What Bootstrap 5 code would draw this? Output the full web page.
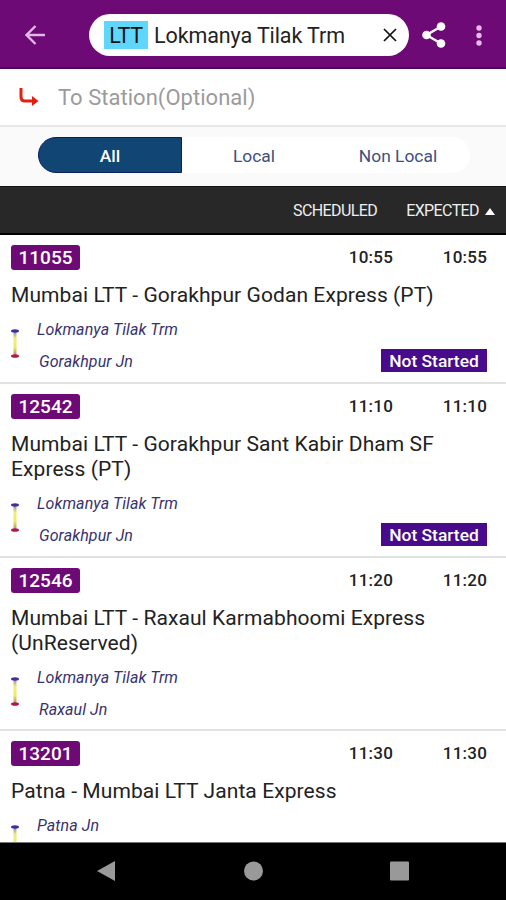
<!DOCTYPE html>
<html lang="en">
<head>
<meta charset="utf-8">
<meta name="viewport" content="width=device-width, initial-scale=1">
<title>Station departures</title>
<link href="https://cdn.jsdelivr.net/npm/bootstrap@5.3.0/dist/css/bootstrap.min.css" rel="stylesheet">
<style>
body{font-family:Roboto,"Liberation Sans",sans-serif;color:#222;background:#fff}
.screen{width:506px;height:900px}
.topbar{height:69px;background:#6d0a75;border-bottom:2px solid #520260}
.back{margin-left:25px;margin-top:2px;width:21px;height:20px}
.pill{margin-left:43px;margin-top:2px;width:320px;height:42px;padding-left:15px;padding-right:12px;font-size:21.5px;letter-spacing:-.1px;white-space:nowrap}
.code{background:#5fd6fc;height:28px;line-height:30px;width:44px;margin-right:6px;color:#111;letter-spacing:-.4px}
.pill .name{line-height:30px;padding-top:2px}
.share{margin-left:13px;margin-top:2px}
.dest{height:56px;padding-left:18px;font-size:22px;color:#9b9b9b;letter-spacing:.03px}
.dest span{margin-left:19px;padding-top:1px}
.filters{height:61px;background:#fafafa;border-top:2px solid #e8e8e8;padding:10px 36px 0 38px}
.filters .btn{width:144px;height:36px;padding:0;border:0;border-radius:0;font-size:17.4px;line-height:38px;color:#3d4f80;background:#fff}
.filters .btn.active{background:#114573;color:#fff;border:1px solid #081f64;line-height:36px;font-weight:500}
.filters .btn:first-child{border-radius:18px 0 0 18px}
.filters .btn:last-child{border-radius:0 18px 18px 0}
.heads{height:49px;background:#282828;border-top:1px solid #111;border-bottom:2px solid #000;color:#eee;font-size:16px;letter-spacing:-.6px;padding-right:11px;padding-top:2px}
.heads .exp{margin-left:29px}
.heads svg{margin-left:6px}
.trains{overflow:hidden}
.train{border-bottom:2px solid #e2e2e2;height:149px;padding:10px 19px 0 11px;flex:none}
.train.two{height:174px}
.train.two.brief{height:173px}
.num{background:#6d0a75;width:69px;height:25px;line-height:26px;font-size:19px;border-radius:3px;font-weight:500}
.time{font-size:17px;font-weight:500;letter-spacing:.2px;line-height:25px;width:94px;text-align:right}
.title{font-size:21px;line-height:25px;letter-spacing:.08px;margin-top:13px;white-space:nowrap}
.route{margin-top:9px;height:64px;font-size:16px;font-style:italic;color:#37336f;letter-spacing:.1px}
.route svg{margin-right:18px;margin-top:12px;flex:none}
.route .stop{height:32px;line-height:25px}
.route .stop+.stop{padding-left:2px}
.status{background:#470b8b;width:106px;height:23px;line-height:25px;font-size:17.4px;letter-spacing:0;margin-top:32px;font-weight:500}
.navkeys{height:58px;background:#000;border-top:1px solid #777}
</style>
<script src="https://cdn.jsdelivr.net/npm/bootstrap@5.3.0/dist/js/bootstrap.bundle.min.js"></script>
</head>
<body>
<svg class="position-absolute" width="0" height="0">
<defs><linearGradient id="rail" x1="0" y1="0" x2="0" y2="1"><stop offset="0" stop-color="#8a80b8"/><stop offset=".3" stop-color="#eeee7a"/><stop offset=".65" stop-color="#eeee60"/><stop offset="1" stop-color="#b08080"/></linearGradient></defs>
</svg>
<div class="screen d-flex flex-column overflow-hidden">
<header class="topbar d-flex align-items-center flex-shrink-0">
<svg class="back flex-shrink-0" viewBox="0 0 21 20" fill="none" stroke="#dfb8e4" stroke-width="2.4"><path d="M20 10H2M10.500 1L1.500 10L10.500 19"/></svg>
<div class="pill bg-white rounded-pill d-flex align-items-center flex-shrink-0"><span class="code text-center">LTT</span><span class="name">Lokmanya Tilak Trm</span>
<svg class="ms-auto" width="14" height="14" viewBox="0 0 14 14" stroke="#111" stroke-width="1.700"><path d="M1 1L13 13M13 1L1 13"/></svg></div>
<svg class="share flex-shrink-0" width="24" height="26" viewBox="0 0 24 26" fill="#fff"><path d="M19 4.500L4.500 13L19 21.500" fill="none" stroke="#fff" stroke-width="2.400"/><circle cx="19" cy="4.500" r="4.300"/><circle cx="4.500" cy="13" r="4.300"/><circle cx="19" cy="21.500" r="4.300"/></svg>
<svg class="ms-auto me-4 mt-1" width="6" height="22" viewBox="0 0 6 22" fill="#e5bce9"><circle cx="3" cy="3" r="2.700"/><circle cx="3" cy="10.500" r="2.700"/><circle cx="3" cy="18" r="2.700"/></svg>
</header>
<div class="dest d-flex align-items-center flex-shrink-0">
<svg width="21" height="19" viewBox="0 0 21 19"><path d="M3 0V9Q3 13 7 13H15" fill="none" stroke="#e3200f" stroke-width="3"/><path d="M14 8L20.500 13L14 18Z" fill="#e3200f"/></svg>
<span>To Station(Optional)</span></div>
<div class="filters flex-shrink-0"><div class="d-flex"><button class="btn active">All</button><button class="btn">Local</button><button class="btn">Non Local</button></div></div>
<div class="heads d-flex align-items-center justify-content-end flex-shrink-0"><span class="sched">SCHEDULED</span><span class="exp">EXPECTED</span><svg width="10" height="7" viewBox="0 0 10 7"><path d="M5 0L10 7H0Z" fill="#fff"/></svg></div>
<main class="trains flex-grow-1 d-flex flex-column">
<article class="train"><div class="d-flex"><span class="num text-white text-center me-auto">11055</span><span class="time">10:55</span><span class="time">10:55</span></div>
<div class="title">Mumbai LTT - Gorakhpur Godan Express (PT)</div>
<div class="route d-flex"><svg width="8" height="29" viewBox="0 0 8 29"><rect x="2.500" y="2" width="3" height="25" fill="url(#rail)"/><ellipse cx="4" cy="2" rx="4" ry="1.700" fill="#472b9c"/><ellipse cx="4" cy="27" rx="4" ry="1.800" fill="#b01843"/></svg><div class="me-auto"><div class="stop">Lokmanya Tilak Trm</div><div class="stop">Gorakhpur Jn</div></div><span class="status text-white text-center fst-normal">Not Started</span></div></article>
<article class="train two"><div class="d-flex"><span class="num text-white text-center me-auto">12542</span><span class="time">11:10</span><span class="time">11:10</span></div>
<div class="title">Mumbai LTT - Gorakhpur Sant Kabir Dham SF<br>Express (PT)</div>
<div class="route d-flex"><svg width="8" height="29" viewBox="0 0 8 29"><rect x="2.500" y="2" width="3" height="25" fill="url(#rail)"/><ellipse cx="4" cy="2" rx="4" ry="1.700" fill="#472b9c"/><ellipse cx="4" cy="27" rx="4" ry="1.800" fill="#b01843"/></svg><div class="me-auto"><div class="stop">Lokmanya Tilak Trm</div><div class="stop">Gorakhpur Jn</div></div><span class="status text-white text-center fst-normal">Not Started</span></div></article>
<article class="train two brief"><div class="d-flex"><span class="num text-white text-center me-auto">12546</span><span class="time">11:20</span><span class="time">11:20</span></div>
<div class="title">Mumbai LTT - Raxaul Karmabhoomi Express<br>(UnReserved)</div>
<div class="route d-flex"><svg width="8" height="29" viewBox="0 0 8 29"><rect x="2.500" y="2" width="3" height="25" fill="url(#rail)"/><ellipse cx="4" cy="2" rx="4" ry="1.700" fill="#472b9c"/><ellipse cx="4" cy="27" rx="4" ry="1.800" fill="#b01843"/></svg><div class="me-auto"><div class="stop">Lokmanya Tilak Trm</div><div class="stop">Raxaul Jn</div></div></div></article>
<article class="train"><div class="d-flex"><span class="num text-white text-center me-auto">13201</span><span class="time">11:30</span><span class="time">11:30</span></div>
<div class="title">Patna - Mumbai LTT Janta Express</div>
<div class="route d-flex"><svg width="8" height="29" viewBox="0 0 8 29"><rect x="2.500" y="2" width="3" height="25" fill="url(#rail)"/><ellipse cx="4" cy="2" rx="4" ry="1.700" fill="#472b9c"/><ellipse cx="4" cy="27" rx="4" ry="1.800" fill="#b01843"/></svg><div class="me-auto"><div class="stop">Patna Jn</div></div></div></article>
</main>
<footer class="navkeys flex-shrink-0"><svg class="d-block" width="506" height="57" viewBox="0 843 506 57" fill="#999"><path d="M97 871L115 861V881Z"/><circle cx="253.500" cy="871" r="9.500"/><rect x="390" y="861.500" width="19" height="19" rx="1"/></svg></footer>
</div>
</body>
</html>
